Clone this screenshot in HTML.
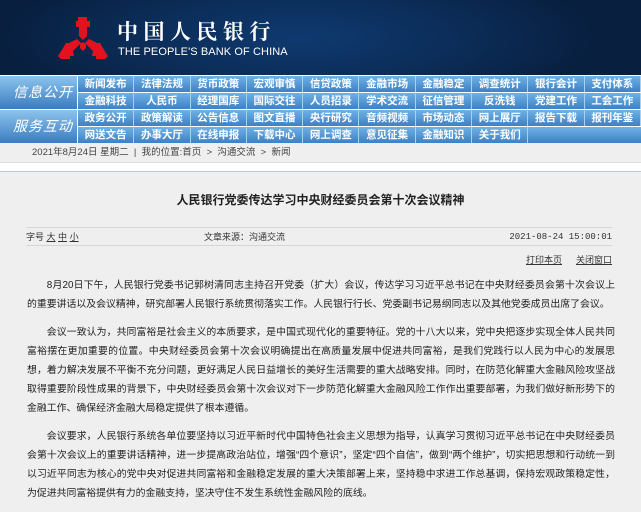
<!DOCTYPE html>
<html><head><meta charset="utf-8"><style>
*{margin:0;padding:0;box-sizing:border-box}
body{width:641px;height:486px;overflow:hidden;background:#efefef;font-family:"Liberation Sans","Noto Sans CJK SC",sans-serif;position:relative}
.hd{position:absolute;left:0;top:0;width:641px;height:75px;background:radial-gradient(ellipse 300px 80px at 300px 38px,#0f3a70,#0b2b55 60%,#081f3f);}
.hd .cn{position:absolute;left:117px;top:20px;font-size:21px;line-height:22px;color:#fff;letter-spacing:5.5px;font-family:"Noto Serif CJK SC","Noto Sans CJK SC",serif;font-weight:bold}
.hd .en{position:absolute;left:118px;top:46px;font-size:11px;line-height:12px;color:#fff;letter-spacing:.1px}
.nav{position:absolute;left:0;top:75px;width:641px;height:68px;background:#fff}
.blk{position:absolute;left:0;width:641px;height:33px}
.lab{position:absolute;left:0;top:0;width:77px;height:33px;background:linear-gradient(#8cc4ec,#3b7cc2);color:#fff;font-style:italic;font-size:14px;line-height:33px;padding-left:13px;letter-spacing:1px}
.row{position:absolute;left:78px;height:16px;width:563px;display:flex}
.row div{width:56.3px;height:16px;color:#fff;font-size:10.5px;font-weight:bold;text-align:center;line-height:16px;border-right:1px solid #a9d0ef;background:linear-gradient(#6fb2e4,#3d80c6)}
.bc{position:absolute;left:0;top:143px;width:641px;height:20px;background:#efefef;border-bottom:1px solid #ddd;font-size:9.5px;color:#444;line-height:20px;padding-left:32px}
.wb{position:absolute;left:0;top:163px;width:641px;height:9px;background:#fff;border-bottom:1px solid #bfc6cf}
.title{position:absolute;left:0;top:191px;width:641px;text-align:center;font-size:12px;font-weight:bold;color:#222}
.meta{position:absolute;left:26px;top:227px;width:586px;height:19px;border-top:1px solid #d6d6d6;border-bottom:1px solid #d6d6d6;font-size:9px;color:#333;line-height:18px}
.links{position:absolute;left:0;top:253px;width:612px;text-align:right;font-size:9px;color:#333}
.links span{text-decoration:underline;margin-left:14px}
.txt{position:absolute;left:27px;top:276px;width:588px;font-size:9.9px;line-height:19px;color:#222;text-align:justify}
.txt p{text-indent:2em;margin-bottom:9px}
</style></head><body>
<div class="hd">
<svg style="position:absolute;left:58px;top:17px" width="50" height="45" viewBox="0 0 50 45"><g fill="#e4121e">
<path d="M20 0h9v4h3v6h-3v9l-4 4-4-4v-9h-3V4h2z"/>
<path d="M2 36l6-10h3l8-4 4 4-8 8 1 5h-4v3H3l-3-3z"/>
<path d="M48 36l-6-10h-3l-8-4-4 4 8 8-1 5h4v3h9l3-3z"/>
<path d="M22 27l3-2 3 2 0 4-3 3-3-3z"/>
</g></svg>
<div class="cn">中国人民银行</div>
<div class="en">THE PEOPLE'S BANK OF CHINA</div>
</div>
<div class="nav">
<div class="blk" style="top:1px"><div class="lab">信息公开</div>
<div class="row" style="top:0"><div>新闻发布</div><div>法律法规</div><div>货币政策</div><div>宏观审慎</div><div>信贷政策</div><div>金融市场</div><div>金融稳定</div><div>调查统计</div><div>银行会计</div><div>支付体系</div></div>
<div class="row" style="top:17px"><div>金融科技</div><div>人民币</div><div>经理国库</div><div>国际交往</div><div>人员招录</div><div>学术交流</div><div>征信管理</div><div>反洗钱</div><div>党建工作</div><div>工会工作</div></div>
</div>
<div class="blk" style="top:35px"><div class="lab">服务互动</div>
<div class="row" style="top:0"><div>政务公开</div><div>政策解读</div><div>公告信息</div><div>图文直播</div><div>央行研究</div><div>音频视频</div><div>市场动态</div><div>网上展厅</div><div>报告下载</div><div>报刊年鉴</div></div>
<div class="row" style="top:17px"><div>网送文告</div><div>办事大厅</div><div>在线申报</div><div>下载中心</div><div>网上调查</div><div>意见征集</div><div>金融知识</div><div>关于我们</div><div style="border:0"></div><div style="border:0"></div></div>
</div>
</div>
<div class="bc">2021年8月24日 星期二 &nbsp;|&nbsp; 我的位置:首页 &nbsp;&gt;&nbsp; 沟通交流 &nbsp;&gt;&nbsp; 新闻</div>
<div class="wb"></div>
<div class="title">人民银行党委传达学习中央财经委员会第十次会议精神</div>
<div class="meta"><span>字号 <u>大</u> <u>中</u> <u>小</u></span><span style="position:absolute;left:178px">文章来源：沟通交流</span><span style="position:absolute;right:0;font-family:'Liberation Mono',monospace">2021-08-24 15:00:01</span></div>
<div class="links"><span>打印本页</span><span>关闭窗口</span></div>
<div class="txt">
<p>8月20日下午，人民银行党委书记郭树清同志主持召开党委（扩大）会议，传达学习习近平总书记在中央财经委员会第十次会议上的重要讲话以及会议精神，研究部署人民银行系统贯彻落实工作。人民银行行长、党委副书记易纲同志以及其他党委成员出席了会议。</p>
<p>会议一致认为，共同富裕是社会主义的本质要求，是中国式现代化的重要特征。党的十八大以来，党中央把逐步实现全体人民共同富裕摆在更加重要的位置。中央财经委员会第十次会议明确提出在高质量发展中促进共同富裕，是我们党践行以人民为中心的发展思想，着力解决发展不平衡不充分问题，更好满足人民日益增长的美好生活需要的重大战略安排。同时，在防范化解重大金融风险攻坚战取得重要阶段性成果的背景下，中央财经委员会第十次会议对下一步防范化解重大金融风险工作作出重要部署，为我们做好新形势下的金融工作、确保经济金融大局稳定提供了根本遵循。</p>
<p>会议要求，人民银行系统各单位要坚持以习近平新时代中国特色社会主义思想为指导，认真学习贯彻习近平总书记在中央财经委员会第十次会议上的重要讲话精神，进一步提高政治站位，增强“四个意识”，坚定“四个自信”，做到“两个维护”，切实把思想和行动统一到以习近平同志为核心的党中央对促进共同富裕和金融稳定发展的重大决策部署上来，坚持稳中求进工作总基调，保持宏观政策稳定性，为促进共同富裕提供有力的金融支持，坚决守住不发生系统性金融风险的底线。</p>
</div>
</body></html>
